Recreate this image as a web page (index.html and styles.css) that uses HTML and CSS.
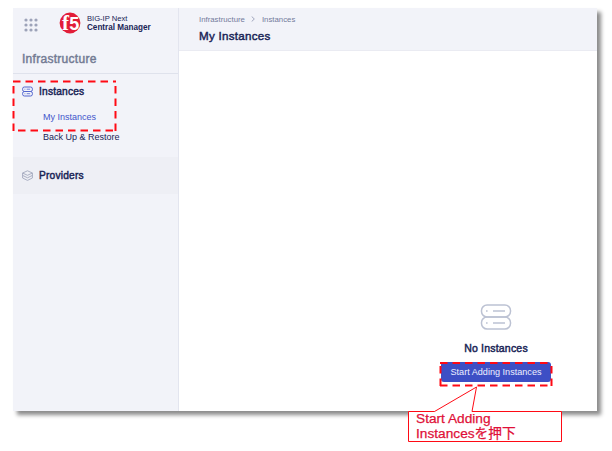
FILE: index.html
```html
<!DOCTYPE html>
<html lang="ja">
<head>
<meta charset="utf-8">
<title>My Instances</title>
<link rel="stylesheet" href="styles.css">
</head>
<body>
<div class="window">
  <aside class="sidebar">
    <div class="brand">
      <svg class="apps" viewBox="0 0 14 14"><g fill="#9da3b9"><circle cx="2" cy="2" r="1.6"/><circle cx="7" cy="2" r="1.6"/><circle cx="12" cy="2" r="1.6"/><circle cx="2" cy="7" r="1.6"/><circle cx="7" cy="7" r="1.6"/><circle cx="12" cy="7" r="1.6"/><circle cx="2" cy="12" r="1.6"/><circle cx="7" cy="12" r="1.6"/><circle cx="12" cy="12" r="1.6"/></g></svg>
      <svg class="logo" viewBox="0 0 22 22"><circle cx="11" cy="11" r="10.4" fill="#e21d38"/><text class="logo-text" x="3" y="18">f</text><text class="logo-text five" x="10.2" y="18">5</text></svg>
      <div class="product"><span class="product-line">BIG-IP Next</span><strong class="product-name">Central Manager</strong></div>
    </div>
    <h2 class="section">Infrastructure</h2>
    <nav>
      <div class="group">
        <a class="item"><svg class="item-icon" viewBox="0 0 11 11" fill="none" stroke="#5265cf"><rect x=".6" y="1" width="9.8" height="4.5" rx="1.8"/><rect x=".6" y="5.500" width="9.8" height="4.5" rx="1.8"/><path d="M2.5 3.2h.8M4.7 3.2h3.4M2.5 7.7h.8M4.7 7.7h3.4" stroke-width=".8"/></svg><span>Instances</span></a>
        <a class="sub active">My Instances</a>
        <a class="sub">Back Up &amp; Restore</a>
      </div>
      <a class="item providers"><svg class="item-icon" viewBox="0 0 11 11" fill="none" stroke="#a3a8bd" stroke-width=".9"><path d="M5.5.8 10.4 3 5.5 5.3.6 3ZM.6 3v5l4.9 2.4L10.4 8V3M.6 5.4l4.9 2.4 4.9-2.4"/></svg><span>Providers</span></a>
    </nav>
  </aside>
  <main class="main">
    <header class="header">
      <div class="crumbs"><span>Infrastructure</span><svg class="chevron" viewBox="0 0 4 6" fill="none" stroke="#8b92ac" stroke-width=".8"><path d="m.7.5 2.6 2.5L.7 5.5"/></svg><span>Instances</span></div>
      <h1 class="title">My Instances</h1>
    </header>
    <section class="empty">
      <svg class="empty-icon" viewBox="0 0 32 26" fill="none" stroke="#bcc2d3" stroke-width="1.5"><rect x="1.5" y="1" width="29" height="12" rx="5.6"/><rect x="1.5" y="13" width="29" height="12" rx="5.6"/><path d="M6 7h1.6M13 7h12M6 19h1.6M13 19h12"/></svg>
      <strong class="empty-title">No Instances</strong>
      <button class="add">Start Adding Instances</button>
    </section>
  </main>
</div>
<svg class="marks" viewBox="0 0 612 451" fill="none" stroke="#ff0a14">
  <path class="dash" d="M13 81.500H116M115.500 86V131M13.500 86V131M18 130.500H116"/>
  <path class="dash" d="M440 363H552M551.500 366V386M440.500 366V386M440 385.500H552"/>
  <path class="callout-line" d="M408.500 411.500H434.500L476.500 387 472 411.500H561.500V441.500H408.500Z"/>
</svg>
<div class="callout">Start Adding<br>Instancesを押下</div>
</body>
</html>
```
FILE: styles.css
```css
* { box-sizing: border-box; }
body {
  margin: 0;
  padding: 8px 0 0 13px;
  width: 612px;
  height: 451px;
  overflow: hidden;
  background: #fff;
  color: #192456;
  font-family: "Liberation Sans", "Noto Sans CJK JP", sans-serif;
  white-space: nowrap;
}
h1, h2 { margin: 0; }
.section, .item, .title, .empty-title { font-weight: 400; -webkit-text-stroke: .45px currentColor; }
.window { display: flex; width: 584px; height: 403px; background: #fff; box-shadow: 4px 4px 4px #8c8c8c; }
.sidebar { width: 166px; background: #f2f3f9; border-right: 1px solid #e3e5ef; }
.brand { display: flex; height: 38px; padding: 4px 0 0 11px; }
.apps { width: 14px; height: 14px; margin-top: 6px; }
.logo { width: 22px; height: 22px; margin-left: 21px; }
.logo-text { fill: #fff; font: bold 21px "Liberation Serif", serif; }
.five { font: bold 18px "Liberation Sans", sans-serif; }
.product { display: flex; flex-direction: column; margin: 2px 0 0 6px; font-size: 7.6px; line-height: 9px; }
.product-name { font-size: 8.15px; }
.section { height: 28px; padding: 6px 0 0 9px; border-bottom: 1px solid #dfe2ec; color: #737b94; font-size: 12px; line-height: 15px; letter-spacing: .28px; }
.group { height: 83px; padding-top: 9px; }
.item { display: flex; align-items: center; height: 16px; padding-left: 9px; font-size: 10.2px; letter-spacing: .2px; }
.item-icon { width: 11px; height: 11px; margin-right: 6px; }
.providers { height: 37px; padding-bottom: 1px; background: #eeeff5; }
.sub { display: block; height: 20px; padding-left: 30px; font-size: 9px; line-height: 20px; }
.active { margin-top: 8px; color: #4255cb; }
.main { display: flex; flex: 1; flex-direction: column; justify-content: space-between; }
.header { height: 43px; padding: 6px 20px; background: #f2f3f9; border-bottom: 1px solid #eaebf2; }
.crumbs { display: flex; align-items: center; height: 10px; color: #737b9b; font-size: 7.8px; }
.chevron { width: 4px; height: 6px; margin: 0 7px 0 6px; }
.title { margin-top: 5px; font-size: 11.6px; line-height: 14px; letter-spacing: .27px; }
.empty { display: flex; flex-direction: column; align-items: center; align-self: flex-end; width: 110px; margin: 0 46px 29px; }
.empty-icon { width: 32px; height: 26px; }
.empty-title { margin: 11px 0 7px; font-size: 10.5px; line-height: 14px; letter-spacing: .2px; }
.add { width: 110px; height: 20px; padding: 0; border: 0; border-radius: 3px; background: #3d4fc5; color: #eef0ff; font: 9.1px/20px "Liberation Sans", sans-serif; }
.marks { position: absolute; inset: 0; width: 612px; height: 451px; }
.dash { stroke-width: 2; stroke-dasharray: 7.5 5; }
.callout-line { fill: #fff; stroke-width: 1; }
.callout { position: absolute; left: 416px; top: 411px; color: #e01038; font-size: 13.7px; line-height: 15px; -webkit-text-stroke: .25px currentColor; }
```
